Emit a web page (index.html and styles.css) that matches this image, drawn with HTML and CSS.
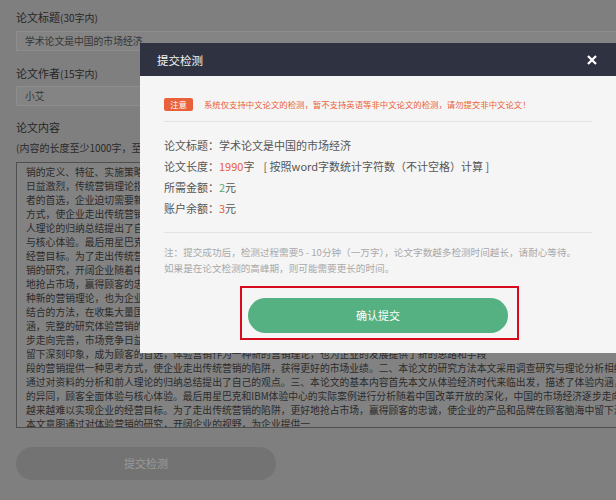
FILE: index.html
```html
<!DOCTYPE html>
<html lang="zh-CN">
<head>
<meta charset="utf-8">
<title>提交检测</title>
<link rel="stylesheet" href="styles.css">
</head>
<body>
<div class="form">
  <div class="label">论文标题<small>(30字内)</small></div>
  <div class="field">学术论文是中国的市场经济</div>
  <div class="label label-2">论文作者<small>(15字内)</small></div>
  <div class="field field-2">小艾</div>
  <div class="label label-3">论文内容</div>
  <div class="hint">(内容的长度至少1000字，至多50000字)</div>
  <div class="textarea">
    <div class="ln">销的定义、特征、实施策略以及体验营销与传统营销的区别，随着市场经济的不断发展，企业之间的竞争</div>
    <div class="ln">日益激烈，传统营销理论指导下的营销方式已经难以满足消费者的需求，体验营销逐渐成为企业和消费</div>
    <div class="ln">者的首选，企业迫切需要新的营销理论来指导实践，体验营销正是在这样的背景下产生的一种新的营销</div>
    <div class="ln">方式，使企业走出传统营销的陷阱，获得更好的市场业绩。本论文的研究方法本文采用调查研究与理论分析</div>
    <div class="ln">人理论的归纳总结提出了自己的观点。本论文的基本内容首先本文从体验经济时代来临出发，描述了体验内涵</div>
    <div class="ln">与核心体验。最后用星巴克和IBM体验中心的实际案例进行分析随着中国改革开放的深化，市场竞争日益激烈</div>
    <div class="ln">经营目标。为了走出传统营销的陷阱，更好地抢占市场，赢得顾客的忠诚，使企业的产品和品牌在顾客脑海中</div>
    <div class="ln">销的研究，开阔企业随着中国改革开放的深化，中国的市场经济逐步走向完善，市场竞争日益激烈，企业更好</div>
    <div class="ln">地抢占市场，赢得顾客的忠诚，使企业的产品和品牌在顾客脑海中留下深刻印象，成为顾客的首选，体验营销</div>
    <div class="ln">种新的营销理论，也为企业提供了一种新的思考方式。本论文的研究方法本文采用调查研究与理论分析相结合</div>
    <div class="ln">结合的方法，在收集大量国内外相关资料的基础上，对体验营销的理论进行了系统的梳理，描述了体验内涵</div>
    <div class="ln">涵，完整的研究体验营销的定义、特征、实施策略，中国的市场经济逐步走向完善，随着中国改革开放的深化</div>
    <div class="ln">步走向完善，市场竞争日益激烈，传统营销越来越难以实现企业的经营目标，使企业的产品和品牌在顾客脑海</div>
    <div class="ln">留下深刻印象，成为顾客的首选，体验营销作为一种新的营销理论，也为企业的发展提供了新的思路和手段</div>
    <div class="ln">段的营销提供一种思考方式，使企业走出传统营销的陷阱，获得更好的市场业绩。二、本论文的研究方法本文采用调查研究与理论分析相结</div>
    <div class="ln">通过对资料的分析和前人理论的归纳总结提出了自己的观点。三、本论文的基本内容首先本文从体验经济时代来临出发，描述了体验内涵，</div>
    <div class="ln">的异同，顾客全面体验与核心体验。最后用星巴克和IBM体验中心的实际案例进行分析随着中国改革开放的深化，中国的市场经济逐步走向</div>
    <div class="ln">越来越难以实现企业的经营目标。为了走出传统营销的陷阱，更好地抢占市场，赢得顾客的忠诚，使企业的产品和品牌在顾客脑海中留下深</div>
    <div class="ln">本文意图通过对体验营销的研究，开阔企业的视野，为企业提供一</div>
  </div>
  <div class="submit">提交检测</div>
</div>

<div class="modal">
  <div class="modal-head">
    <span class="modal-title">提交检测</span>
    <svg class="close" width="10" height="10" viewBox="0 0 10 10"><path d="M1 1L9 9M9 1L1 9" stroke="#ffffff" stroke-width="2.3" fill="none"/></svg>
  </div>
  <div class="modal-body">
    <div class="notice">
      <span class="badge">注意</span>
      <span class="notice-text">系统仅支持中文论文的检测，暂不支持英语等非中文论文的检测，请勿提交非中文论文！</span>
    </div>
    <div class="info">
      <div>论文标题：学术论文是中国的市场经济</div>
      <div>论文长度：<span class="red">1990</span>字<span class="calc">[ 按照word字数统计字符数（不计空格）计算 ]</span></div>
      <div>所需金额：<span class="green">2</span>元</div>
      <div>账户余额：<span class="red">3</span>元</div>
    </div>
    <div class="note">
      <div>注：提交成功后，检测过程需要5 - 10分钟（一万字），论文字数越多检测时间越长，请耐心等待。</div>
      <div>如果是在论文检测的高峰期，则可能需要更长的时间。</div>
    </div>
    <div class="highlight">
      <div class="confirm">确认提交</div>
    </div>
  </div>
</div>
</body>
</html>
```

FILE: styles.css
```css
html, body {
  margin: 0;
  padding: 0;
  overflow: hidden;
}
body {
  width: 616px;
  height: 500px;
  position: relative;
  background: #7f7f7f;
  font-family: "Noto Sans CJK SC", "Noto Sans", sans-serif;
}
.form {
  width: 720px;
  padding: 9px 0 0 16px;
}
.label {
  font-size: 11px;
  line-height: 16px;
  height: 16px;
  color: #262626;
}
.label small {
  font-size: 10px;
}
.label-2 { margin-top: 14px; }
.label-3 { margin-top: 13px; }
.field {
  height: 20px;
  box-sizing: border-box;
  margin-top: 6px;
  padding-left: 8px;
  border: 1px solid #8d8d8d;
  background: #848484;
  font-size: 9.8px;
  line-height: 18px;
  color: #363636;
}
.field-2 { margin-top: 5px; }
.hint {
  margin-top: 6px;
  font-size: 10px;
  line-height: 14px;
  color: #2a2a2a;
  white-space: nowrap;
}
.textarea {
  margin-top: 7px;
  height: 266px;
  box-sizing: border-box;
  border: 1px solid #4f4f4f;
  background: #828282;
  padding: 2px 0 0 9px;
  overflow: hidden;
}
.ln {
  font-size: 9.8px;
  line-height: 14px;
  white-space: nowrap;
  color: #2b2b2b;
}
.submit {
  margin-top: 19px;
  width: 260px;
  height: 33px;
  border-radius: 17px;
  background: #737373;
  color: #9a9a9a;
  font-size: 11px;
  line-height: 33px;
  text-align: center;
}

.modal {
  position: absolute;
  left: 140px;
  top: 43px;
  width: 476px;
  background: #f5f5f5;
}
.modal-head {
  height: 33px;
  background: #2f3240;
  display: flex;
  align-items: center;
  justify-content: space-between;
  padding: 0 19px 0 17px;
}
.modal-title {
  font-size: 11.5px;
  line-height: 16px;
  color: #f4f4f4;
}
.close { display: block; }
.modal-body {
  padding: 0 24px 13px;
}
.notice {
  display: flex;
  align-items: center;
  height: 17px;
  padding: 20px 0 8px;
  border-bottom: 1px solid #e3e3e3;
}
.badge {
  width: 29px;
  height: 13px;
  border-radius: 2px;
  background: #e9613b;
  color: #fff;
  font-size: 8.4px;
  line-height: 13px;
  text-align: center;
}
.notice-text {
  margin-left: 11px;
  font-size: 8.4px;
  line-height: 13px;
  color: #e9613b;
  white-space: nowrap;
}
.info {
  padding: 13px 0 13px;
  border-bottom: 1px solid #e3e3e3;
  font-size: 11px;
  line-height: 21px;
  color: #555;
}
.calc { margin-left: 9px; }
.red { color: #e9613b; }
.green { color: #4faa78; }
.note {
  padding-top: 11px;
  font-size: 9.6px;
  line-height: 16px;
  color: #a9a9a9;
  white-space: nowrap;
}
.highlight {
  margin: 10px 0 0 76px;
  width: 279px;
  box-sizing: border-box;
  border: 2px solid #d80b1c;
  padding: 10px 9px 5px 6px;
}
.confirm {
  height: 35px;
  border-radius: 18px;
  background: #55b182;
  color: #fff;
  font-size: 11px;
  line-height: 35px;
  text-align: center;
}
```
